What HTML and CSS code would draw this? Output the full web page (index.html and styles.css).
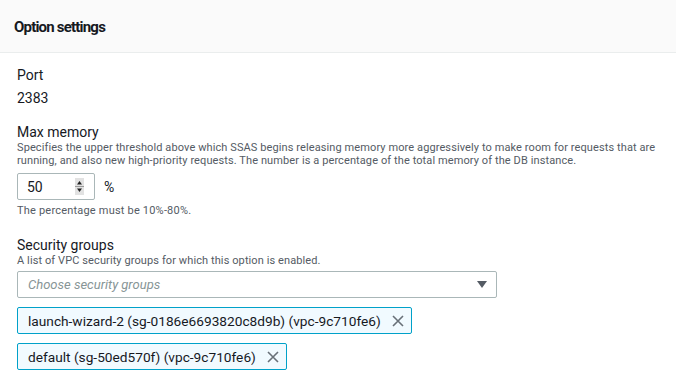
FILE: index.html
```html
<!DOCTYPE html>
<html lang="en">

<head>
  <meta charset="UTF-8">
  <meta name="viewport" content="width=device-width, initial-scale=1.0">
  <title>Option settings</title>
  <link rel="stylesheet" href="styles.css">
</head>

<body>
  <div class="panel">
    <div class="panel-header">
      <h2>Option settings</h2>
    </div>

    <div class="panel-body">
      <div class="field">
        <div class="field-label">Port</div>
        <div class="field-value">2383</div>
      </div>

      <div class="field">
        <div class="field-label">Max memory</div>
        <div class="field-desc">
          Specifies the upper threshold above which SSAS begins releasing memory more aggressively to make room for requests that are
          running, and also new high-priority requests. The number is a percentage of the total memory of the DB instance.
        </div>
        <div class="number-row">
          <div class="number-input">
            <span>50</span>
            <span class="spinner">
              <svg width="9" height="17" viewBox="0 0 9 17">
                <rect x="0" y="0" width="9" height="17" fill="#e2e2e2" />
                <line x1="0" y1="8.5" x2="9" y2="8.5" stroke="#9a9a9a" />
                <path d="M4.5 3 L7 6.5 L2 6.5 Z" fill="#222" />
                <path d="M4.5 14 L7 10.5 L2 10.5 Z" fill="#222" />
              </svg>
            </span>
          </div>
          <span class="unit">%</span>
        </div>
        <div class="field-hint">The percentage must be 10%-80%.</div>
      </div>

      <div class="field">
        <div class="field-label">Security groups</div>
        <div class="field-desc">A list of VPC security groups for which this option is enabled.</div>
        <div class="select">
          <span class="placeholder">Choose security groups</span>
          <svg width="10" height="8" viewBox="0 0 10 8">
            <path d="M0 0 H10 L5 7 Z" fill="#545b64" />
          </svg>
        </div>

        <div class="token-list">
          <div class="token">
            <span>launch-wizard-2 (sg-0186e6693820c8d9b) (vpc-9c710fe6)</span>
            <svg width="12" height="12" viewBox="0 0 12 12">
              <path d="M1 1 L11 11 M11 1 L1 11" stroke="#687078" stroke-width="1.6" />
            </svg>
          </div>
          <div class="token">
            <span>default (sg-50ed570f) (vpc-9c710fe6)</span>
            <svg width="12" height="12" viewBox="0 0 12 12">
              <path d="M1 1 L11 11 M11 1 L1 11" stroke="#687078" stroke-width="1.6" />
            </svg>
          </div>
        </div>
      </div>
    </div>
  </div>
</body>

</html>
```

FILE: styles.css
```css
body {
  margin: 0;
  font-family: Roboto, "Noto Sans", sans-serif;
  color: #16191f;
  background: #fff;
}

.panel-header {
  background: #fafafa;
  border-bottom: 1px solid #eaeded;
  height: 52px;
  padding: 0 14px;
  display: flex;
  align-items: center;
}

.panel-header h2 {
  margin: 0;
  padding-top: 2px;
  font-size: 15px;
  font-weight: bold;
  letter-spacing: -0.8px;
}

.panel-body {
  padding: 13px 17px;
}

.field {
  margin-bottom: 16px;
}

.field-label {
  font-size: 14px;
  line-height: 18px;
}

.field-value {
  font-size: 14px;
  line-height: 18px;
  margin-top: 5px;
}

.field-desc {
  font-size: 11px;
  line-height: 13px;
  letter-spacing: 0.1px;
  color: #545b64;
}

.field-hint {
  font-size: 11px;
  line-height: 13px;
  letter-spacing: 0.2px;
  color: #545b64;
  margin-top: 4px;
  padding-bottom: 3px;
}

.number-row {
  display: flex;
  align-items: center;
  margin-top: 6px;
}

.number-input {
  width: 78px;
  height: 27px;
  box-sizing: border-box;
  border: 1px solid #aab7b8;
  border-radius: 2px;
  display: flex;
  align-items: center;
  justify-content: space-between;
  padding: 0 10px 0 9px;
  font-size: 14px;
}

.spinner {
  display: flex;
}

.unit {
  font-size: 14px;
  margin-left: 9px;
}

.select {
  width: 480px;
  height: 27px;
  box-sizing: border-box;
  border: 1px solid #aab7b8;
  border-radius: 2px;
  display: flex;
  align-items: center;
  justify-content: space-between;
  padding: 0 9px 0 10px;
  margin-top: 4px;
}

.placeholder {
  font-size: 13px;
  font-style: italic;
  color: #879596;
}

.token-list {
  display: flex;
  flex-direction: column;
  align-items: flex-start;
}

.token {
  display: flex;
  align-items: center;
  gap: 11px;
  height: 27px;
  box-sizing: border-box;
  border: 1px solid #00a1c9;
  border-radius: 2px;
  background: #f1faff;
  padding: 0 7px 0 10px;
  margin-top: 9px;
  font-size: 13.7px;
}
```
